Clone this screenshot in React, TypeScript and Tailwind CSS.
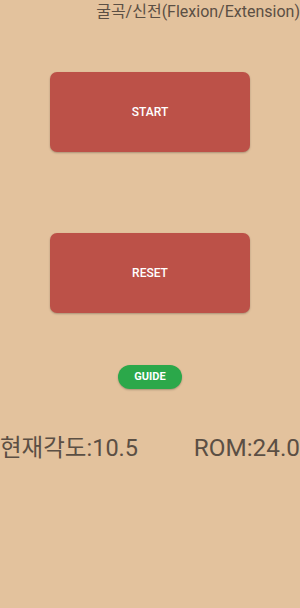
export default function App() {
  return (
    <div
      className="w-[300px] h-[608px] bg-[#e3c29d] flex flex-col overflow-hidden"
      style={{ fontFamily: 'Roboto, "Noto Sans CJK KR", sans-serif' }}
    >
      {/* Title */}
      <div className="flex justify-end pt-[1px] pr-0">
        <span className="text-[16px] leading-[22px] text-[#5b4f44] whitespace-nowrap">
          굴곡/신전(Flexion/Extension)
        </span>
      </div>

      {/* Buttons */}
      <div className="flex flex-col items-center mt-[49px]">
        <button className="w-[200px] h-[80px] rounded-[7px] bg-[#bc5148] shadow-[0_1px_2px_rgba(0,0,0,0.25)] text-white text-[12px] font-medium">
          START
        </button>
        <button className="w-[200px] h-[80px] mt-[81px] rounded-[7px] bg-[#bc5148] shadow-[0_1px_2px_rgba(0,0,0,0.25)] text-white text-[12px] font-medium">
          RESET
        </button>
        <button className="w-[64px] h-[24px] mt-[52px] rounded-full bg-[#2ba84a] shadow-[0_1px_2px_rgba(0,0,0,0.25)] text-white text-[11px] font-bold">
          GUIDE
        </button>
      </div>

      {/* Angle / ROM */}
      <div className="flex justify-between items-center mt-[44px] leading-[30px] text-[#5b4f44]">
        <span className="text-[23.5px]">현재각도:10.5</span>
        <span className="text-[24.3px]">ROM:24.0</span>
      </div>
    </div>
  );
}
